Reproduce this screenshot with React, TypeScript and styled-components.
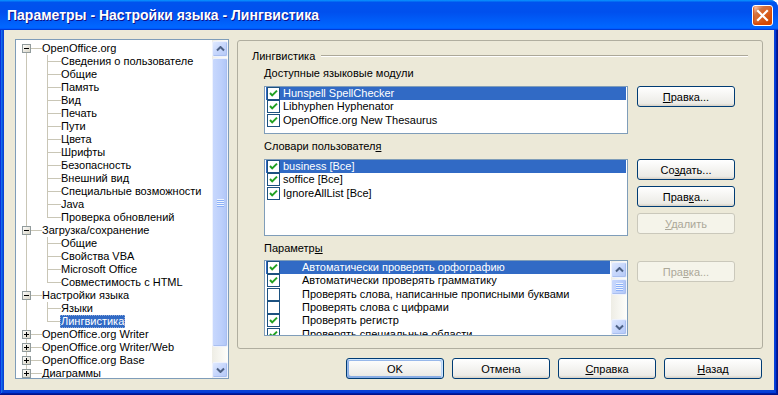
import React from 'react';
import styled, { createGlobalStyle, css } from 'styled-components';

const GlobalStyle = createGlobalStyle`
  html, body {
    margin: 0;
    padding: 0;
    background: #ffffff;
    overflow: hidden;
  }
  body {
    font-family: "Liberation Sans", Arial, sans-serif;
    font-size: 11px;
    color: #000;
  }
  * {
    box-sizing: border-box;
  }
`;

const LINE = '#c9c6b6';

const Window = styled.div`
  width: 778px;
  height: 395px;
  display: flex;
  flex-direction: column;
  border-top-right-radius: 8px;
  overflow: hidden;
  background: #0842d6;
`;

const TitleBar = styled.div`
  height: 30px;
  flex: none;
  display: flex;
  align-items: center;
  justify-content: space-between;
  padding: 0 5px 0 7px;
  background: linear-gradient(
    180deg,
    #0997ff,
    #0053ee 8%,
    #0050ee 40%,
    #0066ff 88%,
    #0066ff 93%,
    #005bff 95%,
    #003dd7 96%,
    #003dd7
  );
`;

const Title = styled.div`
  font-family: "Liberation Sans", Arial, sans-serif;
  font-weight: 700;
  font-size: 14px;
  color: #ffffff;
  text-shadow: 1px 1px #0f1089;
  white-space: nowrap;
`;

const CloseButton = styled.div`
  width: 21px;
  height: 21px;
  border: 1px solid #ffffff;
  border-radius: 3px;
  display: flex;
  align-items: center;
  justify-content: center;
  background-image: radial-gradient(
    circle at 90% 90%,
    #cc4600 0%,
    #dc6527 55%,
    #cd7546 70%,
    #ffccb2 90%,
    #ffffff 100%
  );
  box-shadow: inset 0 -1px 2px 1px #da4600;
`;

const Frame = styled.div`
  flex: 1;
  display: flex;
  padding: 0 4px 5px 4px;
  background: #0842d6;
  box-shadow: inset -1px -1px #00138c, inset 1px 0 #0831d9, inset -2px -2px #001ea0,
    inset 2px 0 #166aee, inset -3px -3px #003bda, inset 3px 0 #0855dd;
`;

const Client = styled.div`
  flex: 1;
  display: flex;
  gap: 8px;
  padding: 9px 11px 11px 11px;
  background: #ece9d8;
`;

/* ---------- tree ---------- */

const Tree = styled.div`
  width: 214px;
  height: 340px;
  flex: none;
  display: flex;
  background: #ffffff;
  border: 1px solid #7f9db9;
`;

const TreeItems = styled.div`
  flex: 1;
  padding-top: 2px;
  overflow: hidden;
`;

type RowKind = 'root' | 'child';

interface TreeRowProps {
  $kind: RowKind;
  $first?: boolean;
  $last?: boolean;
}

const treeLines = (p: TreeRowProps) => {
  const layers: [string, string][] = [];
  if (p.$kind === 'root') {
    layers.push([p.$first ? '10px 6px' : '10px 0', p.$first || p.$last ? '1px 7px' : '1px 13px']);
    layers.push(['10px 6px', '16px 1px']);
  } else {
    layers.push(['10px 0', '1px 13px']);
    layers.push(['31px 0', p.$last ? '1px 7px' : '1px 13px']);
    layers.push(['31px 6px', '14px 1px']);
  }
  return css`
    background-image: ${layers.map(() => `linear-gradient(${LINE}, ${LINE})`).join(', ')};
    background-position: ${layers.map((l) => l[0]).join(', ')};
    background-size: ${layers.map((l) => l[1]).join(', ')};
    background-repeat: no-repeat;
  `;
};

const TreeRow = styled.div<TreeRowProps>`
  height: 13px;
  display: flex;
  align-items: center;
  white-space: nowrap;
  padding-left: ${(p) => (p.$kind === 'root' ? 6 : 45)}px;
  ${treeLines}
`;

const Expander = styled.svg`
  width: 9px;
  height: 9px;
  flex: none;
  margin-right: 11px;
`;

const TreeLabel = styled.span<{ $selected?: boolean }>`
  line-height: 13px;
  height: 13px;
  padding: 0 1px;
  margin-left: -1px;
  ${(p) =>
    p.$selected &&
    css`
      background: #316ac5;
      color: #ffffff;
      outline: 1px dotted #8fa9d9;
      outline-offset: -1px;
    `}
`;

/* ---------- scroll bars ---------- */

const ScrollBar = styled.div`
  width: 16px;
  flex: none;
  display: flex;
  flex-direction: column;
  padding-top: 1px;
  background: linear-gradient(90deg, #eeede5, #fefefb);
`;

const ScrollButton = styled.div`
  height: 16px;
  flex: none;
  display: flex;
  align-items: center;
  justify-content: center;
  border: 1px solid #eef2fd;
  border-radius: 2px;
  background: linear-gradient(135deg, #dfe9fe 0%, #c6d6fc 50%, #b4c8f6 100%);
  box-shadow: inset -1px -1px #a9bff0;
`;

const ScrollThumb = styled.div<{ $height: number }>`
  height: ${(p) => p.$height}px;
  flex: none;
  margin-top: 1px;
  display: flex;
  align-items: center;
  justify-content: center;
  border: 1px solid #eef2fd;
  border-radius: 2px;
  background: linear-gradient(90deg, #c8d8fd 0%, #bccffb 60%, #b0c6f7 100%);
  box-shadow: inset -1px -1px #a9bff0;
`;

const Grip = styled.div`
  width: 7px;
  height: 8px;
  background: repeating-linear-gradient(180deg, #eef4fe 0 1px, #8cb0f8 1px 2px);
`;

const ScrollSpace = styled.div`
  flex: 1;
`;

const Arrow = ({ down }: { down?: boolean }) => (
  <svg width="9" height="6" viewBox="0 0 9 6">
    <polyline
      points={down ? '1,1.5 4.5,5 8,1.5' : '1,4.5 4.5,1 8,4.5'}
      fill="none"
      stroke="#4d6185"
      strokeWidth="2"
    />
  </svg>
);

const VScroll = ({ thumb }: { thumb: number }) => (
  <ScrollBar>
    <ScrollButton>
      <Arrow />
    </ScrollButton>
    <ScrollThumb $height={thumb}>
      <Grip />
    </ScrollThumb>
    <ScrollSpace />
    <ScrollButton>
      <Arrow down />
    </ScrollButton>
  </ScrollBar>
);

/* ---------- right side ---------- */

const RightColumn = styled.div`
  flex: 1;
  display: flex;
  flex-direction: column;
`;

const Panel = styled.div`
  height: 309px;
  margin-top: 1px;
  flex: none;
  border: 1px solid #b0ae9f;
  border-radius: 3px;
  padding: 8px 14px 0 14px;
`;

const GroupHeader = styled.div`
  display: flex;
  align-items: center;
  gap: 6px;
  height: 14px;
  line-height: 14px;
`;

const GroupLine = styled.div`
  flex: 1;
  border-top: 1px solid #aca899;
  border-bottom: 1px solid #ffffff;
`;

const Section = styled.div`
  padding-left: 12px;
  display: flex;
  flex-direction: column;
`;

const FieldLabel = styled.div<{ $top: number }>`
  height: 14px;
  line-height: 14px;
  margin-top: ${(p) => p.$top}px;
`;

const ListRow = styled.div<{ $top: number }>`
  display: flex;
  gap: 9px;
  margin-top: ${(p) => p.$top}px;
`;

const ListBox = styled.div<{ $height: number }>`
  width: 364px;
  height: ${(p) => p.$height}px;
  flex: none;
  display: flex;
  background: #ffffff;
  border: 1px solid #7f9db9;
`;

const ListItems = styled.div`
  flex: 1;
  padding: 0 1px;
  overflow: hidden;
`;

const ListItem = styled.div<{ $selected?: boolean }>`
  height: 13.33px;
  display: flex;
  align-items: center;
  white-space: nowrap;
  padding-left: 1px;
  background: ${(p) => (p.$selected ? '#316ac5' : 'transparent')};
  color: ${(p) => (p.$selected ? '#ffffff' : '#000000')};
`;

const ItemText = styled.span<{ $gap: number }>`
  margin-left: ${(p) => p.$gap}px;
  line-height: 13px;
`;

const ButtonColumn = styled.div<{ $top?: number }>`
  display: flex;
  flex-direction: column;
  gap: 6px;
  padding-top: ${(p) => p.$top ?? 0}px;
`;

const Button = styled.div<{ $default?: boolean; $disabled?: boolean }>`
  width: 98px;
  height: 21px;
  flex: none;
  display: flex;
  align-items: center;
  justify-content: center;
  border: 1px solid #003c74;
  border-radius: 3px;
  background: linear-gradient(180deg, #ffffff, #ecebe6 86%, #d6d0c5);
  color: #000000;
  white-space: nowrap;
  ${(p) =>
    p.$default &&
    css`
      box-shadow: inset -1px 1px #cee7ff, inset 1px 2px #98b8ea, inset -2px 2px #bcd4f6,
        inset 1px -1px #89ade4, inset 2px -2px #89ade4;
    `}
  ${(p) =>
    p.$disabled &&
    css`
      border-color: #cac8bb;
      background: #f5f4ea;
      color: #aca899;
    `}
`;

const ButtonBar = styled.div`
  display: flex;
  justify-content: flex-end;
  gap: 8px;
  margin-top: 9px;
  padding-right: 1px;
`;

const Key = styled.u`
  text-decoration: underline;
  text-underline-offset: 1px;
`;

/* ---------- icons ---------- */

const CloseIcon = () => (
  <svg width="13" height="13" viewBox="0 0 13 13">
    <path d="M2 2 L11 11 M11 2 L2 11" stroke="#ffffff" strokeWidth="2.2" strokeLinecap="square" />
  </svg>
);

const ExpanderIcon = ({ open }: { open: boolean }) => (
  <Expander viewBox="0 0 9 9">
    <defs>
      <linearGradient id="exp" x1="0" y1="0" x2="1" y2="1">
        <stop offset="0" stopColor="#ffffff" />
        <stop offset="1" stopColor="#d6d2c2" />
      </linearGradient>
    </defs>
    <rect x="0.5" y="0.5" width="8" height="8" fill="url(#exp)" stroke="#919b9c" />
    <path d="M2 4.5 H7" stroke="#000" strokeWidth="1" />
    {!open && <path d="M4.5 2 V7" stroke="#000" strokeWidth="1" />}
  </Expander>
);

const CheckBox = ({ checked }: { checked: boolean }) => (
  <svg width="13" height="13" viewBox="0 0 13 13" style={{ flex: 'none' }}>
    <rect x="0.5" y="0.5" width="12" height="12" fill="#ffffff" stroke="#1c5180" />
    {checked && (
      <polyline points="3,6 5.2,8.4 10,3.6" fill="none" stroke="#21a121" strokeWidth="2" />
    )}
  </svg>
);

/* ---------- data ---------- */

interface TreeNode {
  label: string;
  children?: string[];
}

const tree: TreeNode[] = [
  {
    label: 'OpenOffice.org',
    children: [
      'Сведения о пользователе',
      'Общие',
      'Память',
      'Вид',
      'Печать',
      'Пути',
      'Цвета',
      'Шрифты',
      'Безопасность',
      'Внешний вид',
      'Специальные возможности',
      'Java',
      'Проверка обновлений',
    ],
  },
  { label: 'Загрузка/сохранение', children: ['Общие', 'Свойства VBA', 'Microsoft Office', 'Совместимость с HTML'] },
  { label: 'Настройки языка', children: ['Языки', 'Лингвистика'] },
  { label: 'OpenOffice.org Writer' },
  { label: 'OpenOffice.org Writer/Web' },
  { label: 'OpenOffice.org Base' },
  { label: 'Диаграммы' },
];

const modules = ['Hunspell SpellChecker', 'Libhyphen Hyphenator', 'OpenOffice.org New Thesaurus'];
const dictionaries = ['business [Все]', 'soffice [Все]', 'IgnoreAllList [Все]'];
const options: [string, boolean][] = [
  ['Автоматически проверять орфографию', true],
  ['Автоматически проверять грамматику', true],
  ['Проверять слова, написанные прописными буквами', false],
  ['Проверять слова с цифрами', false],
  ['Проверять регистр', true],
  ['Проверять специальные области', true],
];

function App() {
  return (
    <>
      <GlobalStyle />
      <Window>
        <TitleBar>
          <Title>Параметры - Настройки языка - Лингвистика</Title>
          <CloseButton>
            <CloseIcon />
          </CloseButton>
        </TitleBar>
        <Frame>
          <Client>
            <Tree>
              <TreeItems>
                {tree.map((node, i) => (
                  <React.Fragment key={node.label}>
                    <TreeRow $kind="root" $first={i === 0} $last={i === tree.length - 1}>
                      <ExpanderIcon open={!!node.children} />
                      <TreeLabel>{node.label}</TreeLabel>
                    </TreeRow>
                    {node.children?.map((child, j) => (
                      <TreeRow key={child + j} $kind="child" $last={j === node.children!.length - 1}>
                        <TreeLabel $selected={child === 'Лингвистика'}>{child}</TreeLabel>
                      </TreeRow>
                    ))}
                  </React.Fragment>
                ))}
              </TreeItems>
              <VScroll thumb={289} />
            </Tree>

            <RightColumn>
              <Panel>
                <GroupHeader>
                  <span>Лингвистика</span>
                  <GroupLine />
                </GroupHeader>
                <Section>
                  <FieldLabel $top={3}>
                    <Key>Д</Key>оступные языковые модули
                  </FieldLabel>
                  <ListRow $top={6}>
                    <ListBox $height={48}>
                      <ListItems>
                        {modules.map((m, i) => (
                          <ListItem key={m} $selected={i === 0}>
                            <CheckBox checked />
                            <ItemText $gap={3}>{m}</ItemText>
                          </ListItem>
                        ))}
                      </ListItems>
                    </ListBox>
                    <ButtonColumn>
                      <Button>
                        <span>
                          <Key>П</Key>равка...
                        </span>
                      </Button>
                    </ButtonColumn>
                  </ListRow>

                  <FieldLabel $top={5}>
                    Словари пользовател<Key>я</Key>
                  </FieldLabel>
                  <ListRow $top={6}>
                    <ListBox $height={77}>
                      <ListItems>
                        {dictionaries.map((d, i) => (
                          <ListItem key={d} $selected={i === 0}>
                            <CheckBox checked />
                            <ItemText $gap={3}>{d}</ItemText>
                          </ListItem>
                        ))}
                      </ListItems>
                    </ListBox>
                    <ButtonColumn>
                      <Button>
                        <span>
                          Со<Key>з</Key>дать...
                        </span>
                      </Button>
                      <Button>
                        <span>
                          Прав<Key>к</Key>а...
                        </span>
                      </Button>
                      <Button $disabled>
                        <span>
                          <Key>У</Key>далить
                        </span>
                      </Button>
                    </ButtonColumn>
                  </ListRow>

                  <FieldLabel $top={5}>
                    Параметр<Key>ы</Key>
                  </FieldLabel>
                  <ListRow $top={5}>
                    <ListBox $height={76}>
                      <ListItems>
                        {options.map(([text, checked], i) => (
                          <ListItem key={text} $selected={i === 0}>
                            <CheckBox checked={checked} />
                            <ItemText $gap={22}>{text}</ItemText>
                          </ListItem>
                        ))}
                      </ListItems>
                      <VScroll thumb={16} />
                    </ListBox>
                    <ButtonColumn $top={1}>
                      <Button $disabled>
                        <span>
                          Пра<Key>в</Key>ка...
                        </span>
                      </Button>
                    </ButtonColumn>
                  </ListRow>
                </Section>
              </Panel>

              <ButtonBar>
                <Button $default>OK</Button>
                <Button>Отмена</Button>
                <Button>
                  <span>
                    <Key>С</Key>правка
                  </span>
                </Button>
                <Button>
                  <span>
                    <Key>Н</Key>азад
                  </span>
                </Button>
              </ButtonBar>
            </RightColumn>
          </Client>
        </Frame>
      </Window>
    </>
  );
}

export default App;
